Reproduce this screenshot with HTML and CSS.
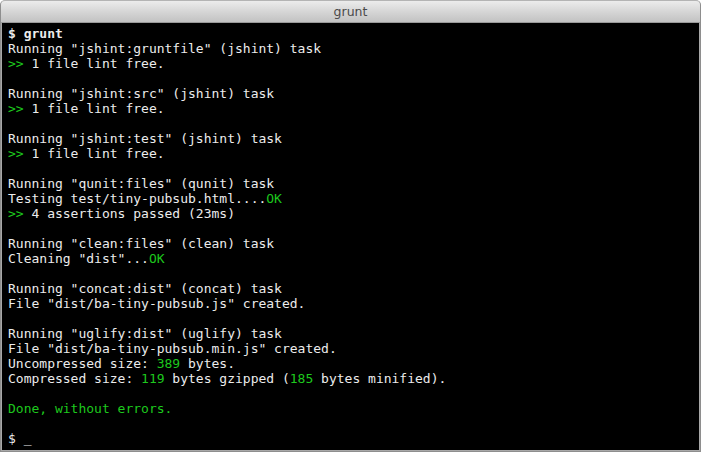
FILE: index.html
```
<!DOCTYPE html>
<html>
<head>
<meta charset="utf-8">
<link rel="stylesheet" href="styles.css">
</head>
<body>
<div class="window">
  <div class="titlebar">grunt</div>
  <div class="term"><pre class="out"><b class="cmd">$ grunt</b>
Running "jshint:gruntfile" (jshint) task
<span class="g">&gt;&gt;</span> 1 file lint free.

Running "jshint:src" (jshint) task
<span class="g">&gt;&gt;</span> 1 file lint free.

Running "jshint:test" (jshint) task
<span class="g">&gt;&gt;</span> 1 file lint free.

Running "qunit:files" (qunit) task
Testing test/tiny-pubsub.html....<span class="g">OK</span>
<span class="g">&gt;&gt;</span> 4 assertions passed (23ms)

Running "clean:files" (clean) task
Cleaning "dist"...<span class="g">OK</span>

Running "concat:dist" (concat) task
File "dist/ba-tiny-pubsub.js" created.

Running "uglify:dist" (uglify) task
File "dist/ba-tiny-pubsub.min.js" created.
Uncompressed size: <span class="g">389</span> bytes.
Compressed size: <span class="g">119</span> bytes gzipped (<span class="g">185</span> bytes minified).

<span class="g">Done, without errors.</span>

$ _</pre></div>
</div>
</body>
</html>
```
FILE: styles.css
```
html, body {
  margin: 0;
  padding: 0;
  background: #ffffff;
}
.window {
  width: 701px;
  height: 452px;
  box-sizing: border-box;
  display: flex;
  flex-direction: column;
  border-radius: 5px 5px 0 0;
  overflow: hidden;
  background: #a8a8a8;
  border: 1px solid #8e8e8e;
  border-top-color: #b4b4b4;
}
.titlebar {
  height: 21px;
  flex: none;
  background: linear-gradient(#ececec, #d6d6d6 50%, #c2c2c2);
  font-family: "DejaVu Sans", sans-serif;
  font-size: 12.5px;
  line-height: 21px;
  text-align: center;
  color: #4a4a4a;
  border-bottom: 1px solid #9a9a9a;
}
.term {
  flex: 1;
  background: #000000;
  margin: 0 1px 1px 1px;
  padding: 3px 0 0 6px;
}
.out {
  margin: 0;
  font-family: "DejaVu Sans Mono", monospace;
  font-size: 13px;
  line-height: 15px;
  color: #ececec;
}
.cmd {
  font-weight: bold;
}
.g {
  color: #1dc81d;
}
```
